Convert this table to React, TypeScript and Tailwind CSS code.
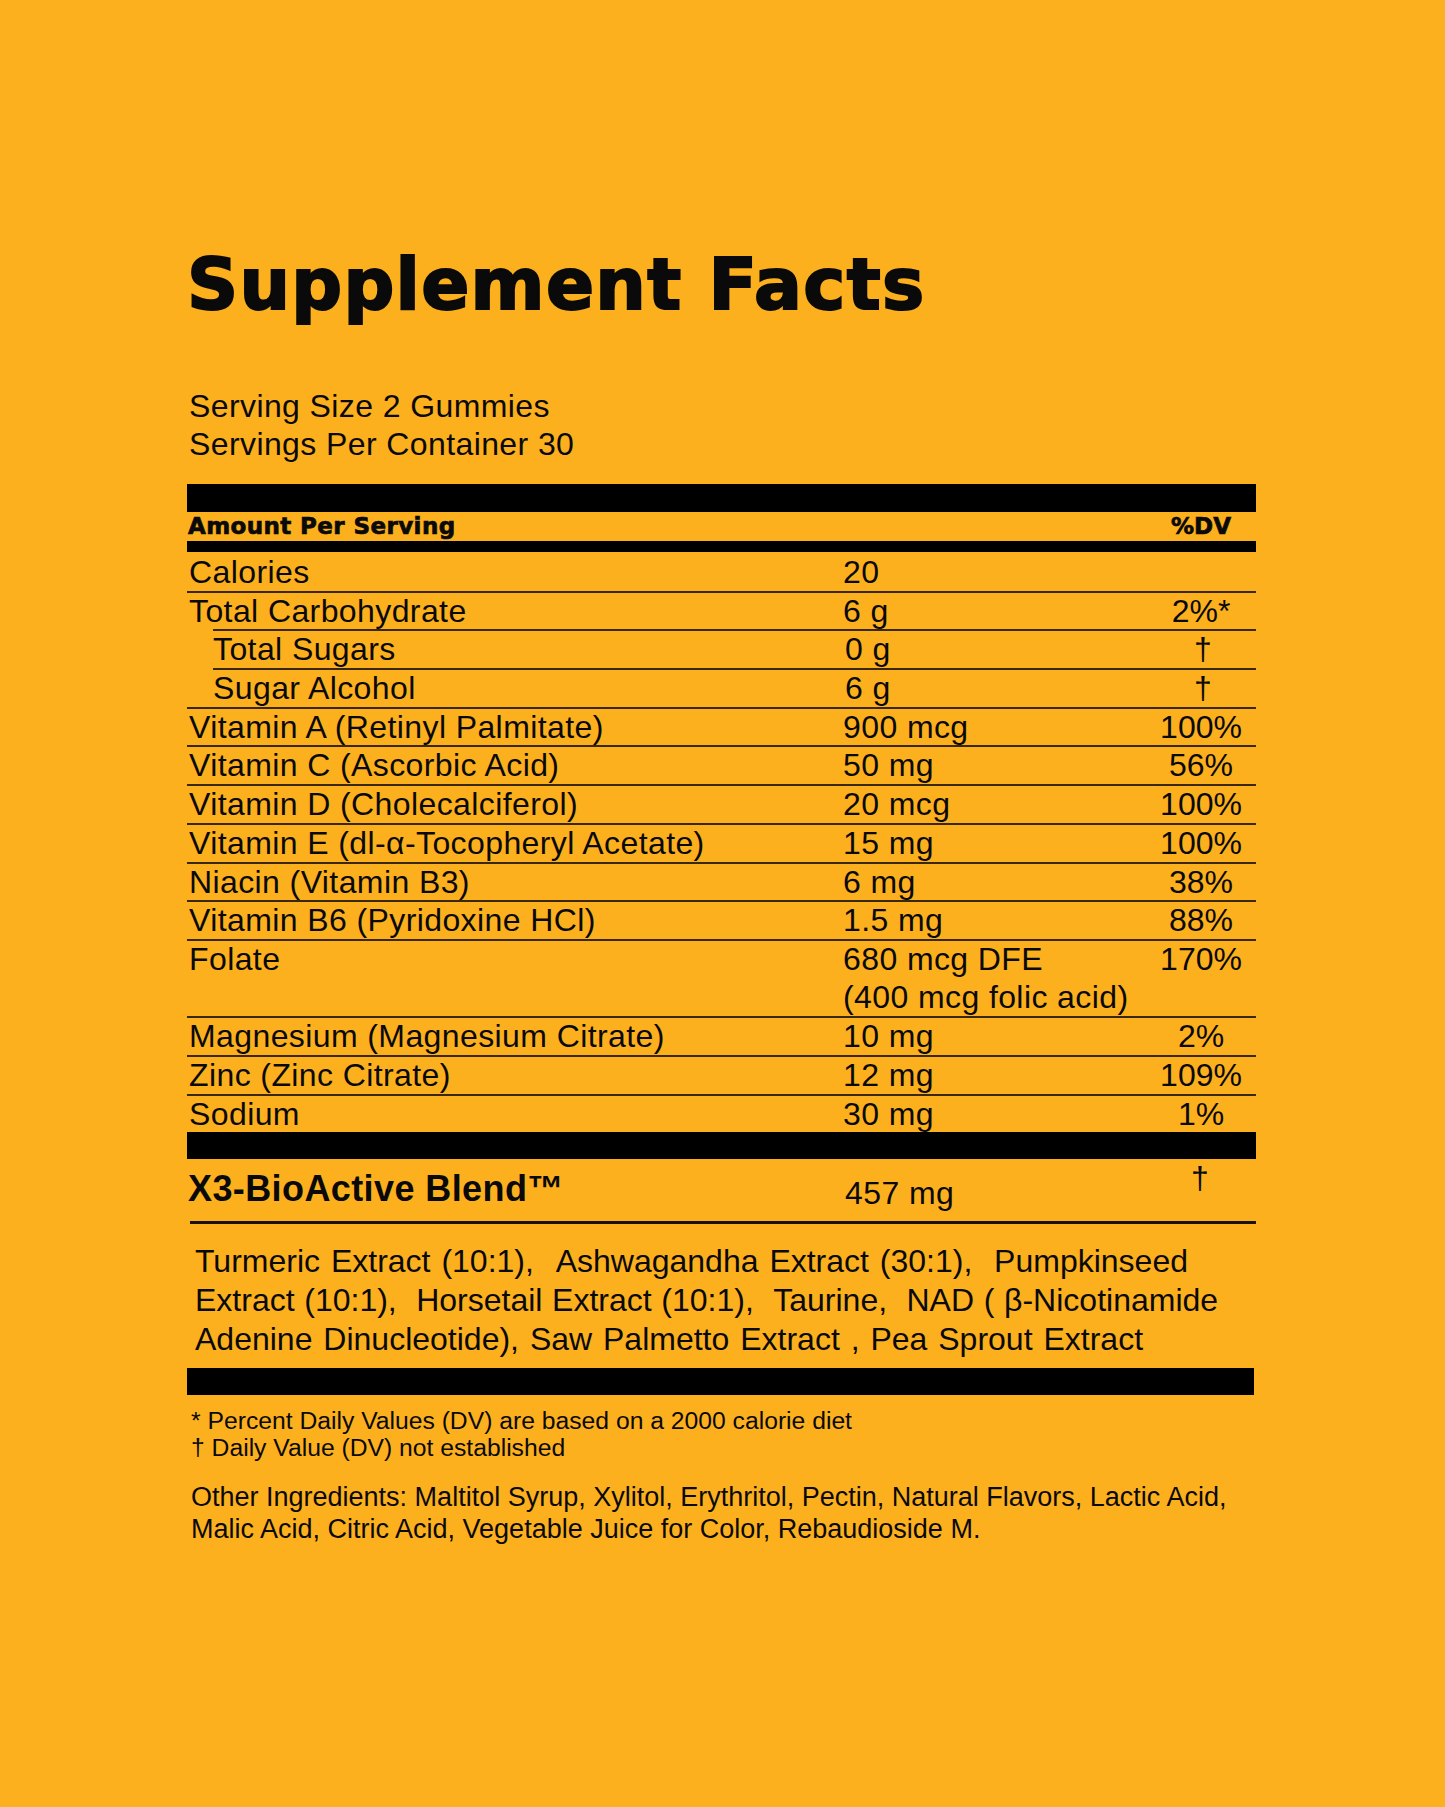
import React from "react";

type Row = { name: string; amt: string | string[]; dv: string; sub?: boolean };

const rows: Row[] = [
  { name: "Calories", amt: "20", dv: "" },
  { name: "Total Carbohydrate", amt: "6 g", dv: "2%*" },
  { name: "Total Sugars", amt: "0 g", dv: "†", sub: true },
  { name: "Sugar Alcohol", amt: "6 g", dv: "†", sub: true },
  { name: "Vitamin A (Retinyl Palmitate)", amt: "900 mcg", dv: "100%" },
  { name: "Vitamin C (Ascorbic Acid)", amt: "50 mg", dv: "56%" },
  { name: "Vitamin D (Cholecalciferol)", amt: "20 mcg", dv: "100%" },
  { name: "Vitamin E (dl-α-Tocopheryl Acetate)", amt: "15 mg", dv: "100%" },
  { name: "Niacin (Vitamin B3)", amt: "6 mg", dv: "38%" },
  { name: "Vitamin B6 (Pyridoxine HCl)", amt: "1.5 mg", dv: "88%" },
  { name: "Folate", amt: ["680 mcg DFE", "(400 mcg folic acid)"], dv: "170%" },
  { name: "Magnesium (Magnesium Citrate)", amt: "10 mg", dv: "2%" },
  { name: "Zinc (Zinc Citrate)", amt: "12 mg", dv: "109%" },
  { name: "Sodium", amt: "30 mg", dv: "1%" },
];

function FactRow({ row, first }: { row: Row; first: boolean }) {
  const double = Array.isArray(row.amt);
  return (
    <div
      className={[
        "flex leading-[36px]",
        double ? "h-[77.4px]" : "h-[38.7px]",
        first ? "pt-[2px]" : "border-t-2 border-[#3a2804]",
        row.sub ? "ml-[26px]" : "",
      ].join(" ")}
    >
      <div className={row.sub ? "w-[632px] shrink-0" : "w-[656px] shrink-0 pl-[2px]"}>{row.name}</div>
      <div className="w-[305px] shrink-0">
        {double ? (
          <div className="-mt-[1px] flex flex-col leading-[38px]">
            {(row.amt as string[]).map((a) => (
              <span key={a}>{a}</span>
            ))}
          </div>
        ) : (
          row.amt
        )}
      </div>
      <div className="w-[106px] shrink-0 text-center tracking-[0px]">{row.dv}</div>
    </div>
  );
}

export default function App() {
  return (
    <div className="min-h-[1807px] w-full bg-[#FDB01E] font-['Liberation_Sans',Arial,sans-serif] text-[#0a0a0a]">
      <div className="ml-[187px] w-[1069px] pt-[249px]">
        <h1 className="font-['DejaVu_Sans',sans-serif] text-[71px] font-bold leading-[71px] tracking-[1.3px] [-webkit-text-stroke:2px_#0a0a0a]">
          Supplement Facts
        </h1>

        <div className="mt-[67px] pl-[2px] text-[32px] leading-[38px] tracking-[0.4px]">
          <div>Serving Size 2 Gummies</div>
          <div>Servings Per Container 30</div>
        </div>

        <div className="mt-[21px] h-[28px] w-full bg-black" />
        <div className="flex h-[29px] items-start font-['DejaVu_Sans',sans-serif] text-[23px] font-bold leading-[29px]">
          <div className="w-[961px] shrink-0 pl-[1px] tracking-[0.4px] [-webkit-text-stroke:0.7px_#0a0a0a]">
            Amount Per Serving
          </div>
          <div className="w-[106px] shrink-0 text-center [-webkit-text-stroke:0.7px_#0a0a0a]">%DV</div>
        </div>
        <div className="h-[11px] w-full bg-black" />

        <div className="text-[32px] tracking-[0.4px]">
          {rows.map((r, i) => (
            <FactRow key={r.name} row={r} first={i === 0} />
          ))}
        </div>

        <div className="h-[27px] w-full bg-black" />

        <div className="flex h-[62px]">
          <div className="w-[658px] shrink-0 pl-[1px] pt-[9px] text-[36px] font-bold leading-[42px] tracking-[0.4px]">
            X3-BioActive Blend™
          </div>
          <div className="w-[305px] shrink-0 pt-[16px] text-[32px] leading-[36px] tracking-[0.4px]">457 mg</div>
          <div className="w-[100px] shrink-0 pt-[1px] text-center text-[32px] leading-[36px]">†</div>
        </div>
        <div className="ml-[3px] h-[3px] w-[1066px] bg-[#1a1204]" />

        <div className="mt-[18px] pl-[8px] text-[32px] leading-[39px]">
          <div className="[word-spacing:2px]">Turmeric Extract (10:1), &nbsp;Ashwagandha Extract (30:1), &nbsp;Pumpkinseed</div>
          <div className="[word-spacing:0.8px]">Extract (10:1), &nbsp;Horsetail Extract (10:1), &nbsp;Taurine, &nbsp;NAD ( β-Nicotinamide</div>
          <div className="[word-spacing:2px]">Adenine Dinucleotide), Saw Palmetto Extract , Pea Sprout Extract</div>
        </div>

        <div className="mt-[9px] h-[27px] w-[1067px] bg-black" />

        <div className="mt-[12px] pl-[4px] text-[24.7px] leading-[27px]">
          <div>* Percent Daily Values (DV) are based on a 2000 calorie diet</div>
          <div>† Daily Value (DV) not established</div>
        </div>

        <div className="mt-[20px] pl-[4px] text-[27px] leading-[32px]">
          <div>Other Ingredients: Maltitol Syrup, Xylitol, Erythritol, Pectin, Natural Flavors, Lactic Acid,</div>
          <div>Malic Acid, Citric Acid, Vegetable Juice for Color, Rebaudioside M.</div>
        </div>
      </div>
    </div>
  );
}
